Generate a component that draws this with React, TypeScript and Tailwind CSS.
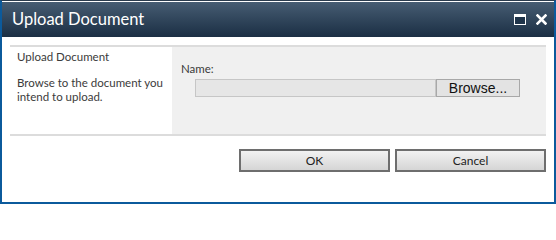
import React from 'react';

const uiFont = { fontFamily: 'Lato, "Open Sans", sans-serif' };

// 对话框标题栏右侧的小按钮
function MaximizeIcon() {
  return (
    <svg width="12" height="11" viewBox="0 0 12 11">
      <rect x="0.5" y="0.5" width="11" height="10" fill="#1f344a" stroke="#ffffff" />
      <rect x="1" y="1" width="10" height="2" fill="#ffffff" />
    </svg>
  );
}

function CloseIcon() {
  return (
    <svg width="11" height="11" viewBox="0 0 11 11">
      <path d="M1.5 1.5 L9.5 9.5 M9.5 1.5 L1.5 9.5" stroke="#ffffff" strokeWidth="2.6" strokeLinecap="square" />
    </svg>
  );
}

export default function App() {
  return (
    <div className="w-[556px] h-[204px] bg-white overflow-hidden" style={uiFont}>
      <div className="w-full h-full flex flex-col border-l-2 border-r-2 border-b-2 border-t border-[#0b5a9c] border-t-[#2b3c4e] box-border">
        {/* 标题栏 */}
        <div className="h-[35px] mt-[1px] flex items-center justify-between pl-[10px] pr-[7px] bg-gradient-to-b from-[#475d73] to-[#1b2f44]">
          <span className="text-white text-[16.5px] leading-none">Upload Document</span>
          <div className="flex items-center gap-[10px]">
            <MaximizeIcon />
            <CloseIcon />
          </div>
        </div>

        {/* 内容 */}
        <div className="flex-1 px-[8px] pt-[8px]">
          <div className="h-[2px] bg-[#dcdcdc]" />
          <div className="flex h-[87px]">
            <div className="w-[162px] pl-[7px] pt-[3px] text-[11.5px] text-[#3b3b3b] leading-[14px]">
              <div>Upload Document</div>
              <div className="mt-[12px]">Browse to the document you intend to upload.</div>
            </div>
            <div className="flex-1 bg-[#f0f0f0] pl-[9px] pt-[15px]">
              <div className="text-[11.5px] text-[#3b3b3b] leading-[14px]">Name:</div>
              <div className="flex mt-[3px] ml-[14px]">
                <div className="w-[241px] h-[18px] bg-[#e6e6e6] border border-[#c6c6c6]" />
                <button
                  className="w-[84px] h-[18px] bg-[#e3e3e3] border border-[#a8a8a8] text-[14px] leading-none text-[#111] flex items-center justify-center"
                  style={{ fontFamily: '"Liberation Sans", Arial, sans-serif' }}
                >
                  Browse...
                </button>
              </div>
            </div>
          </div>
          <div className="h-[2px] bg-[#dcdcdc]" />

          {/* 按钮 */}
          <div className="flex justify-end gap-[5px] mt-[13px]">
            <button className="w-[151px] h-[23px] border-2 border-[#6e6e6e] bg-gradient-to-b from-[#f2f2f2] to-[#d5d5d5] text-[12px] text-[#222] flex items-center justify-center">
              OK
            </button>
            <button className="w-[151px] h-[23px] border-2 border-[#6e6e6e] bg-gradient-to-b from-[#f2f2f2] to-[#d5d5d5] text-[12px] text-[#222] flex items-center justify-center">
              Cancel
            </button>
          </div>
        </div>
      </div>
    </div>
  );
}
